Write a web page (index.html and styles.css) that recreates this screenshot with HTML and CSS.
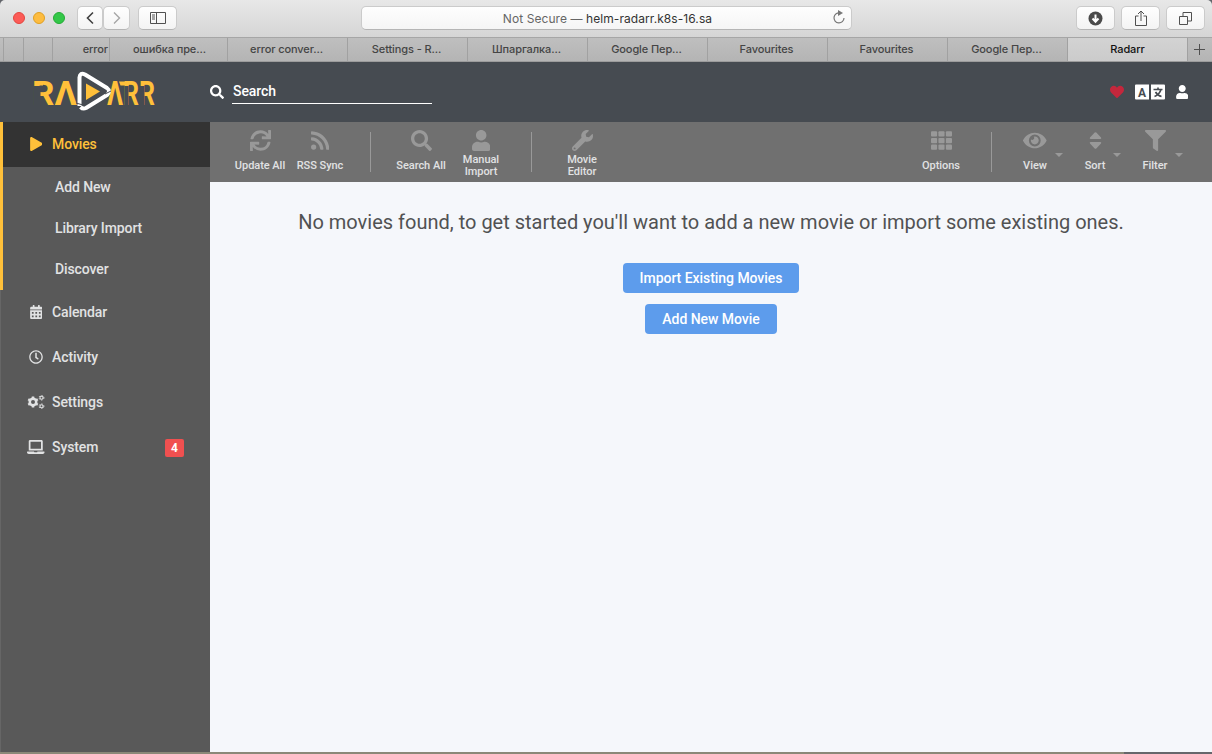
FILE: index.html
```html
<!DOCTYPE html>
<html lang="en">
<head>
<meta charset="utf-8">
<title>Radarr</title>
<link rel="stylesheet" href="styles.css">
</head>
<body>
<div class="window">
  <div class="titlebar">
    <div class="lights"><i class="light red"></i><i class="light yellow"></i><i class="light green"></i></div>
    <div class="chrome-btn nav-btn"><svg width="10" height="14" viewBox="0 0 10 14"><path d="M8 1.500 2.500 7 8 12.500" class="line strong"/></svg></div>
    <div class="chrome-btn nav-btn next"><svg width="10" height="14" viewBox="0 0 10 14"><path d="M2 1.500 7.500 7 2 12.500" class="line faint"/></svg></div>
    <div class="chrome-btn side-btn"><svg width="16" height="12" viewBox="0 0 16 12"><path d="M.5.5h15v11H.5zM6.500.5v11M2 3h3M2 5h3M2 7h3" class="line"/></svg></div>
    <div class="address"><span class="secure">Not Secure —&nbsp;</span><span>helm-radarr.k8s-16.sa</span>
      <svg class="reload" width="14" height="15" viewBox="0 0 14 15"><path d="M8 3A5 5 0 1 0 12 8" class="line soft"/><path d="M6 0l5 3-5 3z" fill="#777"/></svg>
    </div>
    <div class="chrome-btn tool"><svg width="15" height="15" viewBox="0 0 15 15"><circle cx="7.500" cy="7.500" r="7" fill="#4a4a4a"/><path d="M7.500 3.500v6M4.500 7.500l3 3.200 3-3.200" fill="none" stroke="#fff" stroke-width="2"/></svg></div>
    <div class="chrome-btn tool"><svg width="12" height="16" viewBox="0 0 12 16"><path d="M3.500 6h-3v9.500h11V6h-3M6 11V1M3 4l3-3 3 3" class="line"/></svg></div>
    <div class="chrome-btn tool"><svg width="13" height="13" viewBox="0 0 13 13"><path d="M.5 4.500h8v8h-8zM4 4V.5h8.500V9H9" class="line"/></svg></div>
  </div>
  <div class="tabs">
    <div class="tab t0"></div><div class="tab t1"></div><div class="tab t2"></div>
    <div class="tab t3">error</div><div class="tab t4">ошибка пре...</div>
    <div class="tab">error conver...</div><div class="tab">Settings - R...</div><div class="tab">Шпаргалка...</div><div class="tab">Google Пер...</div><div class="tab">Favourites</div><div class="tab">Favourites</div><div class="tab">Google Пер...</div><div class="tab active">Radarr</div>
    <div class="plus"><svg width="11" height="11" viewBox="0 0 11 11"><path d="M5.500 0v11M0 5.500h11" class="line"/></svg></div>
  </div>

  <header class="header">
    <svg class="logo" width="122" height="42" viewBox="0 0 122 42">
      <g class="logo-text">
        <text x="-2" y="34" textLength="45" lengthAdjust="spacingAndGlyphs">RΛ</text>
        <text x="73" y="34" textLength="48" lengthAdjust="spacingAndGlyphs">ΛRR</text>
      </g>
      <path d="M0 15h6.500v20H0zM90.500 15h4v20h-4zM106 15h4.500v20H106z" fill="#464b51"/>
      <path d="M1 10.500h8v4H1zM85 10.500h10v4H86.500z" fill="#ffc03a"/>
      <path d="M45.500 35V6.500Q46 1 51 3.500L73 17Q77 20 73 24L52 37Q49 38.500 46.500 36" fill="#464b51" stroke="#fff" stroke-width="4" stroke-linejoin="round"/>
      <path d="M42 32l7 2M71 23l6-3" stroke="#464b51" stroke-width="1"/>
      <path d="M52 12.500 66 20.500 52 29z" fill="#ffc03a"/>
    </svg>
    <div class="search">
      <svg width="14" height="14" viewBox="0 0 512 512"><path fill="#fff" d="M505 442.700L405.300 343c-4.500-4.500-10.600-7-17-7H372c27.600-35.300 44-79.700 44-128C416 93.100 322.900 0 208 0S0 93.100 0 208s93.100 208 208 208c48.300 0 92.700-16.400 128-44v16.300c0 6.400 2.500 12.500 7 17l99.700 99.700c9.400 9.400 24.600 9.400 33.900 0l28.300-28.300c9.400-9.400 9.400-24.600.1-34zM208 336c-70.700 0-128-57.200-128-128 0-70.700 57.200-128 128-128 70.700 0 128 57.200 128 128 0 70.700-57.200 128-128 128z"/></svg>
      <div class="field">Search</div>
    </div>
    <div class="header-icons">
      <svg width="14" height="14" viewBox="0 0 512 512"><path fill="#c4273c" d="M462.300 62.600C407.500 15.900 326 24.300 275.700 76.200L256 96.500l-19.700-20.300C186.100 24.300 104.500 15.900 49.700 62.600c-62.800 53.600-66.100 149.800-9.900 207.900l193.500 199.800c12.500 12.900 32.800 12.900 45.300 0l193.500-199.800c56.300-58.100 53-154.300-9.800-207.900z"/></svg>
      <svg class="lang" width="30" height="16" viewBox="0 0 30 16"><path d="M1 .5h13v15H1a1 1 0 0 1-1-1v-13a1 1 0 0 1 1-1zM16 .5h13a1 1 0 0 1 1 1v13a1 1 0 0 1-1 1H16z" fill="#fff"/><text x="7" y="12.500" class="lang-a">A</text><path d="M18.500 5.500h9M23 3.500v2M26 5.500q-1.500 5-6.500 7M20.500 8q2 3.500 6 4.500" class="lang-line"/></svg>
      <svg width="12.500" height="14" viewBox="0 0 448 512"><path fill="#fff" d="M224 256c70.700 0 128-57.300 128-128S294.700 0 224 0 96 57.300 96 128s57.300 128 128 128zm89.600 32h-16.700c-22.200 10.200-46.900 16-72.900 16s-50.600-5.800-72.900-16h-16.700C60.200 288 0 348.200 0 422.400V464c0 26.500 21.500 48 48 48h352c26.500 0 48-21.500 48-48v-41.600c0-74.200-60.200-134.400-134.400-134.400z"/></svg>
    </div>
  </header>

  <div class="main">
    <nav class="sidebar">
      <div class="group">
        <div class="item current"><span class="ic"><svg width="12.500" height="14" viewBox="0 0 448 512"><path d="M424.400 214.700L72.400 6.600C43.800-10.300 0 6.100 0 47.900V464c0 37.500 40.700 60.100 72.400 41.300l352-208c31.400-18.500 31.500-64.100 0-82.600z"/></svg></span><span>Movies</span></div>
        <div class="child">Add New</div><div class="child">Library Import</div><div class="child">Discover</div>
      </div>
      <div class="item"><span class="ic"><svg width="12.500" height="14" viewBox="0 0 448 512"><path fill-rule="evenodd" d="M400 64h-48V16c0-9-7-16-16-16h-32c-9 0-16 7-16 16v48H160V16c0-9-7-16-16-16h-32c-9 0-16 7-16 16v48H48C21 64 0 85 0 112v48h448v-48c0-27-21-48-48-48zM0 192v272c0 27 21 48 48 48h352c27 0 48-21 48-48V192zM64 256h64v64H64zM192 256h64v64h-64zM320 256h64v64h-64zM64 384h64v64H64zM192 384h64v64h-64zM320 384h64v64h-64z"/></svg></span><span>Calendar</span></div>
      <div class="item"><span class="ic"><svg width="14" height="14" viewBox="0 0 512 512"><path d="M256 8C119 8 8 119 8 256s111 248 248 248 248-111 248-248S393 8 256 8zm0 448c-110.500 0-200-89.500-200-200S145.500 56 256 56s200 89.500 200 200-89.500 200-200 200zm61.800-104.400l-84.900-61.700c-3.100-2.300-4.900-5.900-4.900-9.700V116c0-6.600 5.400-12 12-12h32c6.600 0 12 5.400 12 12v141.700l66.800 48.600c5.400 3.900 6.500 11.400 2.600 16.800L334.600 349c-3.900 5.300-11.400 6.500-16.800 2.600z"/></svg></span><span>Activity</span></div>
      <div class="item"><span class="ic"><svg class="cogs" width="17.500" height="14" viewBox="0 0 35 28"><g fill="none"><circle cx="12" cy="14" r="6.500" stroke-width="5"/><path d="M12 3v22M2.500 8.500l19 11M2.500 19.500l19-11" stroke-width="5" stroke-dasharray="5 12 6"/><circle cx="29" cy="5.500" r="3.100" stroke-width="2.200"/><circle cx="29" cy="5.500" r="4.800" stroke-width="1.800" stroke-dasharray="2.510"/><circle cx="29" cy="22.500" r="3.100" stroke-width="2.200"/><circle cx="29" cy="22.500" r="4.800" stroke-width="1.800" stroke-dasharray="2.510"/></g></svg></span><span>Settings</span></div>
      <div class="item"><span class="ic"><svg width="17.500" height="14" viewBox="0 0 640 512"><path d="M624 416H381.500c-.7 19.800-14.700 32-32.700 32H288c-18.700 0-33-17.500-32.800-32H16c-8.800 0-16 7.200-16 16v16c0 35.200 28.800 64 64 64h512c35.200 0 64-28.800 64-64v-16c0-8.800-7.200-16-16-16zM576 48c0-26.400-21.600-48-48-48H112C85.600 0 64 21.600 64 48v336h512V48zm-64 272H128V64h384v256z"/></svg></span><span>System</span><span class="badge">4</span></div>
    </nav>

    <div class="page">
      <div class="toolbar">
        <div class="tb"><svg width="21" height="21" viewBox="0 0 512 512"><path d="M440.650 12.570l4 82.770A247.160 247.160 0 0 0 255.830 8C134.730 8 33.910 94.920 12.290 209.820A12 12 0 0 0 24.090 224h49.050a12 12 0 0 0 11.670-9.260 175.910 175.910 0 0 1 317-56.940l-101.460-4.860a12 12 0 0 0-12.570 12v47.410a12 12 0 0 0 12 12H500a12 12 0 0 0 12-12V12a12 12 0 0 0-12-12h-47.370a12 12 0 0 0-11.980 12.570zM255.830 432a175.610 175.610 0 0 1-146-77.800l101.800 4.870a12 12 0 0 0 12.570-12v-47.400a12 12 0 0 0-12-12H12a12 12 0 0 0-12 12V500a12 12 0 0 0 12 12h47.350a12 12 0 0 0 12-12.600l-4.150-82.570A247.170 247.170 0 0 0 255.830 504c121.110 0 221.930-86.920 243.550-201.820a12 12 0 0 0-11.800-14.180h-49.050a12 12 0 0 0-11.670 9.260A175.860 175.860 0 0 1 255.830 432z"/></svg><span>Update All</span></div>
        <div class="tb"><svg width="18.400" height="21" viewBox="0 0 448 512"><path d="M128 416a64 64 0 1 1-128 0 64 64 0 0 1 128 0zm175.700 47.200c-8.300-154.600-132.100-278.600-286.900-286.900C7.700 175.800 0 183.100 0 192.300v48c0 8.400 6.500 15.500 14.900 16 111.800 7.300 201.500 96.700 208.800 208.800.5 8.400 7.600 14.900 16 14.900h48c9.200 0 16.500-7.700 16-16.800zm144.300.3C439.600 229.700 251.500 40.400 16.500 32 7.500 31.700 0 39 0 48v48c0 8.600 6.800 15.700 15.500 16 191.100 7.900 344.600 161.400 352.400 352.500.4 8.600 7.400 15.500 16 15.500h48c9.100 0 16.400-7.500 16.100-16.500z"/></svg><span>RSS Sync</span></div>
        <i class="sep"></i>
        <div class="tb"><svg width="21" height="21" viewBox="0 0 512 512"><path d="M505 442.700L405.300 343c-4.500-4.500-10.600-7-17-7H372c27.600-35.300 44-79.700 44-128C416 93.100 322.900 0 208 0S0 93.100 0 208s93.100 208 208 208c48.300 0 92.700-16.400 128-44v16.300c0 6.400 2.500 12.500 7 17l99.700 99.700c9.400 9.400 24.600 9.400 33.900 0l28.300-28.300c9.400-9.400 9.400-24.600.1-34zM208 336c-70.700 0-128-57.200-128-128 0-70.700 57.200-128 128-128 70.700 0 128 57.200 128 128 0 70.700-57.200 128-128 128z"/></svg><span>Search All</span></div>
        <div class="tb two"><svg width="18.400" height="21" viewBox="0 0 448 512"><path d="M224 256c70.700 0 128-57.300 128-128S294.700 0 224 0 96 57.300 96 128s57.300 128 128 128zm89.600 32h-16.700c-22.200 10.200-46.900 16-72.900 16s-50.600-5.800-72.900-16h-16.700C60.200 288 0 348.200 0 422.400V464c0 26.500 21.500 48 48 48h352c26.500 0 48-21.500 48-48v-41.600c0-74.200-60.200-134.400-134.400-134.400z"/></svg><span>Manual<br>Import</span></div>
        <i class="sep"></i>
        <div class="tb two"><svg width="21" height="21" viewBox="0 0 512 512"><path d="M507.700 109.100c-2.200-9-13.500-12.100-20.100-5.500l-74.400 74.400-67.900-11.300-11.300-67.900 74.400-74.400c6.600-6.600 3.400-17.900-5.700-20.100-47.400-11.800-99.500.9-136.600 37.900-39.600 39.600-50.500 97.100-34 147.200L18.700 402.800c-25 25-25 65.500 0 90.500s65.500 25 90.500 0l213.200-213.200c50.100 16.700 107.500 5.600 147.400-34.300 37.100-37 49.700-89.300 37.900-136.700zM64 472a24 24 0 1 1 0-48 24 24 0 0 1 0 48z"/></svg><span>Movie<br>Editor</span></div>
        <div class="right">
          <div class="tb"><svg width="21" height="21" viewBox="0 0 512 512"><g><rect y="32" width="149" height="128" rx="24"/><rect x="181" y="32" width="149" height="128" rx="24"/><rect x="363" y="32" width="149" height="128" rx="24"/><rect y="192" width="149" height="128" rx="24"/><rect x="181" y="192" width="149" height="128" rx="24"/><rect x="363" y="192" width="149" height="128" rx="24"/><rect y="352" width="149" height="128" rx="24"/><rect x="181" y="352" width="149" height="128" rx="24"/><rect x="363" y="352" width="149" height="128" rx="24"/></g></svg><span>Options</span></div>
          <i class="sep"></i>
          <div class="tb menu"><svg width="23.600" height="21" viewBox="0 0 576 512"><path d="M572.500 241.400C518.300 135.600 410.900 64 288 64S57.700 135.600 3.500 241.400a32.400 32.400 0 0 0 0 29.200C57.700 376.400 165.100 448 288 448s230.300-71.600 284.500-177.400a32.400 32.400 0 0 0 0-29.200zM288 400a144 144 0 1 1 144-144 144 144 0 0 1-144 144zm0-240a95.300 95.300 0 0 0-25.300 3.800 47.900 47.900 0 0 1-66.900 66.900A95.800 95.800 0 1 0 288 160z"/></svg><span>View</span><i class="caret"></i></div>
          <div class="tb menu sort"><svg width="13" height="21" viewBox="0 0 13 21"><path d="M1.500 9h10q1.300-.4.500-1.500L7.300 2.500q-.8-.7-1.600 0L1 7.500Q.2 8.600 1.500 9zM1.500 12h10q1.300.4.500 1.500L7.300 18.500q-.8.7-1.600 0L1 13.500Q.2 12.400 1.500 12z"/></svg><span>Sort</span><i class="caret"></i></div>
          <div class="tb menu filter"><svg width="21" height="21" viewBox="0 0 512 512"><path d="M488 0H24C2.700 0-8 25.900 7.100 41L192 225.900V432c0 7.800 3.800 15.200 10.200 19.700l80 56c15.800 11 37.800-.2 37.800-19.700V225.900L504.900 41C520 25.900 509.300 0 488 0z"/></svg><span>Filter</span><i class="caret"></i></div>
        </div>
      </div>
      <div class="content">
        <div class="message">No movies found, to get started you'll want to add a new movie or import some existing ones.</div>
        <div class="button wide">Import Existing Movies</div>
        <div class="button">Add New Movie</div>
      </div>
    </div>
  </div>
  <div class="bottom-edge"><i></i></div>
</div>
</body>
</html>
```

FILE: styles.css
```css
* { box-sizing: border-box; }
body { margin: 0; background: #62646a; font-family: Roboto, "Liberation Sans", sans-serif; }
svg { display: block; flex: none; }
.window { width: 1212px; height: 754px; display: flex; flex-direction: column; overflow: hidden; border-radius: 5px 5px 0 0; }

.titlebar { height: 37px; display: flex; align-items: center; background: linear-gradient(#e8e8e8, #d5d5d5); padding: 0 7px 1px 13px; font-family: Inter, sans-serif; }
.lights { display: flex; gap: 8px; width: 64px; }
.light { width: 12px; height: 12px; border-radius: 50%; border: 1px solid; }
.red { background: #fc5b57; border-color: #e2463f; }
.yellow { background: #fdbc40; border-color: #dfa023; }
.green { background: #33c748; border-color: #24ab35; }
.chrome-btn { height: 24px; border-radius: 5px; background: linear-gradient(#fefefe, #f3f3f3); border: 1px solid #cbcbcb; border-bottom-color: #b5b5b5; display: flex; align-items: center; justify-content: center; }
.nav-btn { width: 26px; }
.next { margin-right: 8px; width: 27px; }
.side-btn { width: 39px; margin-right: 184px; }
.line { fill: none; stroke: #505050; stroke-width: 1; }
.strong { stroke: #404040; stroke-width: 1.6; }
.faint { stroke: #a5a5a5; stroke-width: 1.4; }
.soft { stroke: #777; stroke-width: 1.2; }
.address { position: relative; width: 491px; height: 24px; background: linear-gradient(#fefefe, #f5f5f5); border: 1px solid #cbcbcb; border-bottom-color: #b5b5b5; border-radius: 5px; display: flex; justify-content: center; align-items: center; font-size: 12px; color: #333; letter-spacing: .07px; padding-left: 2px; margin-right: auto; }
.secure { color: #666; }
.reload { position: absolute; right: 5px; top: 3px; }
.tool { width: 39px; margin-right: 6px; }
.tool:last-child { margin-right: 0; }

.tabs { height: 25px; display: flex; background: linear-gradient(#bfbfbf, #b4b4b4); border-top: 1px solid #a6a6a6; border-bottom: 1px solid #9c9c9c; font: 500 11px Inter, sans-serif; letter-spacing: -.1px; color: #454545; }
.tab { width: 120px; border-right: 1px solid #a1a1a1; display: flex; justify-content: center; align-items: center; white-space: nowrap; flex: none; padding: 0 2px 1px 0; }
.t0 { width: 4px; }
.t1 { width: 20px; }
.t2 { width: 29px; }
.t3 { width: 57px; justify-content: flex-end; padding-right: 1px; }
.t4 { width: 118px; padding: 0 0 1px 2px; }
.active { background: linear-gradient(#d3d3d3, #cbcbcb); color: #111; padding-right: 0; }
.plus { flex: 1; display: flex; align-items: center; justify-content: center; padding-right: 2px; }

.header { height: 60px; flex: none; background: #464b51; display: flex; align-items: center; padding: 0 24px 0 34px; }
.logo { margin-right: 54px; overflow: visible; }
.logo-text { font: 700 33px Roboto, sans-serif; fill: #ffc03a; }
.search { display: flex; align-items: center; gap: 8px; }
.field { width: 200px; height: 26px; border-bottom: 1px solid #fff; color: #fff; font-size: 14px; font-weight: 500; line-height: 27px; padding-left: 1px; letter-spacing: -.1px; margin-bottom: 2px; }
.header-icons { margin-left: auto; display: flex; align-items: center; gap: 11px; }
.lang-a { font: 700 12px Roboto, sans-serif; fill: #464b51; text-anchor: middle; }
.lang-line { fill: none; stroke: #464b51; stroke-width: 1.6; }

.main { height: 630px; display: flex; flex: none; }
.sidebar { width: 210px; background: #595959; color: #e1e2e3; font-size: 14px; font-weight: 500; letter-spacing: -.1px; border-left: 1px solid #666; }
.group { border-left: 3px solid #ffc03a; margin-left: -1px; }
.item { height: 45px; display: flex; align-items: center; padding: 0 26px 1px 25px; }
.group .item { padding-left: 23px; }
.item svg { fill: #e1e2e3; }
.current { background: #333; color: #ffc03a; }
.current svg { fill: #ffc03a; }
.ic { width: 20px; margin-right: 6px; display: flex; justify-content: center; }
.item .cogs { stroke: #e1e2e3; fill: none; }
.child { height: 41px; line-height: 41px; padding-left: 52px; }
.badge { margin-left: auto; background: #f05050; color: #fff; border-radius: 2px; width: 19px; height: 18px; line-height: 18px; font-size: 12px; text-align: center; font-weight: 700; position: relative; top: 1px; }

.page { flex: 1; background: #f5f7fb; }
.toolbar { height: 60px; background: #707070; display: flex; padding: 0 20px; }
.tb { width: 60px; display: flex; flex-direction: column; align-items: center; padding-top: 8px; color: #e1e2e3; font-size: 11px; font-weight: 500; letter-spacing: -.04px; line-height: 12px; text-align: center; position: relative; white-space: nowrap; }
.tb svg { fill: #999; }
.tb span { margin-top: 9px; }
.two span { margin-top: 3px; }
.sep { width: 1px; height: 40px; margin: 10px 20px; background: #999; }
.right { margin-left: auto; display: flex; padding-right: 7px; }
.right .sep { margin: 10px 13px 10px 20px; }
.caret { position: absolute; top: 31px; left: 50px; border: 4px solid transparent; border-top-color: #999; border-bottom: 0; }
.sort .caret { left: 48px; }
.content { display: flex; flex-direction: column; align-items: center; padding-top: 26px; }
.message { font-size: 20px; line-height: 28px; color: #515253; white-space: nowrap; margin-bottom: 27px; }
.button { width: 132px; height: 30px; line-height: 31px; border-radius: 4px; background: #5d9cec; color: #fff; text-align: center; font-size: 14px; font-weight: 500; letter-spacing: -.05px; }
.wide { width: 176px; margin-bottom: 11px; }
.bottom-edge { height: 2px; background: #8b8878; display: flex; justify-content: flex-end; }
.bottom-edge i { width: 88px; background: #66666b; }
```
